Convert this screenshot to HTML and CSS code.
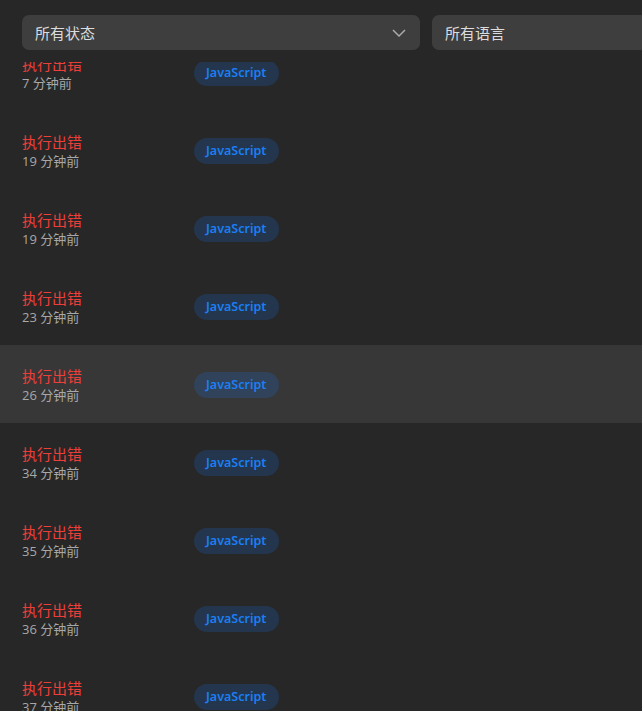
FILE: index.html
```html
<!DOCTYPE html>
<html lang="zh">
<head>
<meta charset="utf-8">
<link rel="stylesheet" href="styles.css">
</head>
<body>
<div class="page">
  <header class="filters">
    <div class="select">
      <span>所有状态</span>
      <svg class="chev" width="14" height="8" viewBox="0 0 14 8"><path d="M1 1l6 6 6-6" fill="none" stroke="#a9a9a9" stroke-width="1.5"/></svg>
    </div>
    <div class="select"><span>所有语言</span></div>
  </header>
  <div class="viewport">
    <ul class="list">
      <li class="row"><div class="meta"><div class="status">执行出错</div><div class="time">7 分钟前</div></div><span class="badge">JavaScript</span></li>
      <li class="row"><div class="meta"><div class="status">执行出错</div><div class="time">19 分钟前</div></div><span class="badge">JavaScript</span></li>
      <li class="row"><div class="meta"><div class="status">执行出错</div><div class="time">19 分钟前</div></div><span class="badge">JavaScript</span></li>
      <li class="row"><div class="meta"><div class="status">执行出错</div><div class="time">23 分钟前</div></div><span class="badge">JavaScript</span></li>
      <li class="row hover"><div class="meta"><div class="status">执行出错</div><div class="time">26 分钟前</div></div><span class="badge">JavaScript</span></li>
      <li class="row"><div class="meta"><div class="status">执行出错</div><div class="time">34 分钟前</div></div><span class="badge">JavaScript</span></li>
      <li class="row"><div class="meta"><div class="status">执行出错</div><div class="time">35 分钟前</div></div><span class="badge">JavaScript</span></li>
      <li class="row"><div class="meta"><div class="status">执行出错</div><div class="time">36 分钟前</div></div><span class="badge">JavaScript</span></li>
      <li class="row"><div class="meta"><div class="status">执行出错</div><div class="time">37 分钟前</div></div><span class="badge">JavaScript</span></li>
    </ul>
  </div>
</div>
</body>
</html>
```

FILE: styles.css
```css
html, body {
  margin: 0;
  padding: 0;
  background: #272727;
  overflow: hidden;
  height: 711px;
}
body {
  font-family: "Open Sans", "Noto Sans CJK SC", sans-serif;
}
.page {
  display: flex;
  flex-direction: column;
  height: 711px;
  width: 642px;
  overflow: hidden;
}
.filters {
  display: flex;
  gap: 12px;
  padding: 15px 0 12px 22px;
  background: #272727;
  flex: none;
  height: 35px;
  position: relative;
  z-index: 1;
}
.select {
  flex: none;
  width: 398px;
  height: 35px;
  box-sizing: border-box;
  background: #3e3e3e;
  border-radius: 7px;
  padding: 0 13px;
  display: flex;
  align-items: center;
  justify-content: space-between;
  color: #dcdcdc;
  font-family: "Noto Sans CJK SC", sans-serif;
  font-size: 15px;
}
.chev {
  margin-right: 1px;
}
.viewport {
  flex: 1;
  overflow: hidden;
}
.list {
  list-style: none;
  margin: -29px 0 0 0;
  padding: 0;
}
.row {
  height: 78px;
  box-sizing: border-box;
  padding: 2px 22px 0;
  display: flex;
  align-items: center;
}
.row.hover {
  background: #373737;
}
.meta {
  width: 172px;
  display: flex;
  flex-direction: column;
}
.status {
  color: #ec3f3a;
  font-family: "Noto Sans CJK SC", sans-serif;
  font-size: 15px;
  line-height: 20px;
}
.time {
  color: #a8a8a8;
  font-family: "Open Sans", "Noto Sans CJK SC", sans-serif;
  font-size: 13px;
  line-height: 18px;
}
.badge {
  display: inline-flex;
  align-items: center;
  height: 26px;
  padding: 0 13px 0 12px;
  border-radius: 13px;
  background: rgba(26, 115, 232, 0.2);
  color: #1a7ff5;
  font-family: "Noto Sans", sans-serif;
  font-weight: 600;
  font-size: 12.5px;
  margin-top: -1px;
}
```
